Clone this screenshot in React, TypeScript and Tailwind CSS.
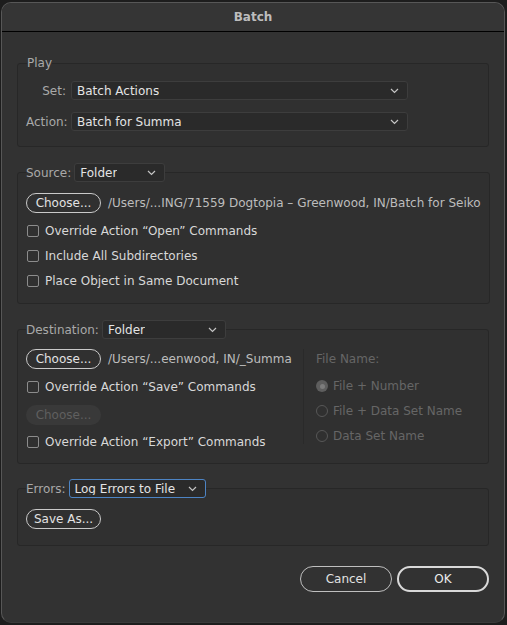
import React from "react";

const font = { fontFamily: '"DejaVu Sans", "Liberation Sans", sans-serif' };

function Chevron(): React.JSX.Element {
  return (
    <svg width="9" height="6" viewBox="0 0 9 6" fill="none" className="shrink-0">
      <path d="M1 1l3.5 3.5L8 1" stroke="#c4c4c4" strokeWidth="1.2" />
    </svg>
  );
}

function Dropdown({
  value,
  width,
  focused = false,
}: {
  value: string;
  width: string;
  focused?: boolean;
}): React.JSX.Element {
  return (
    <div
      className={`${width} h-[19px] flex items-center justify-between pl-[5px] pr-[8px] rounded-[3px] bg-[#2a2a2a] text-[#e4e4e4] ${
        focused ? "border border-[#4d84c4]" : "border border-[#3d3d3d]"
      }`}
    >
      <span className="truncate">{value}</span>
      <Chevron />
    </div>
  );
}

function Pill({ label, disabled = false }: { label: string; disabled?: boolean }): React.JSX.Element {
  return (
    <div
      className={`w-[75px] h-[20px] flex items-center justify-center rounded-full ${
        disabled ? "bg-[#393939] text-[#5f5f5f]" : "border border-[#c9c9c9] text-[#e2e2e2]"
      }`}
    >
      {label}
    </div>
  );
}

function Check({ label }: { label: string }): React.JSX.Element {
  return (
    <div className="h-[16px] flex items-center gap-[6px] pl-[1px]">
      <div className="w-[12px] h-[12px] rounded-[2px] border border-[#8c8c8c]" />
      <span className="text-[#d8d8d8]">{label}</span>
    </div>
  );
}

function Radio({ label, on = false }: { label: string; on?: boolean }): React.JSX.Element {
  return (
    <div className="h-[16px] flex items-center gap-[5px]">
      <div
        className={`w-[12px] h-[12px] rounded-full flex items-center justify-center ${
          on ? "bg-[#5e5e5e]" : "border border-[#575757]"
        }`}
      >
        {on && <div className="w-[5px] h-[5px] rounded-full bg-[#7c7c7c]" />}
      </div>
      <span className="text-[#666666]">{label}</span>
    </div>
  );
}

export default function App(): React.JSX.Element {
  return (
    <div className="w-[507px] h-[625px] bg-[#1d1d1d] pt-[2px] pl-[1px] text-[12px] leading-none" style={font}>
      <div className="w-[504px] h-[621px] rounded-[10px] border border-[#575757] border-b-[#3a3a3a] bg-[#323232] flex flex-col overflow-hidden">
        {/* Title */}
        <div className="h-[29px] shrink-0 flex items-center justify-center border-b border-black bg-[#353535]">
          <span className="font-bold text-[#bdbdbd]">Batch</span>
        </div>

        <div className="flex flex-col px-[15px] pt-[24px]">
          {/* Play */}
          <fieldset className="border border-[#272727] rounded-[3px] bg-[#303030] px-[9px] pb-[15px]">
            <legend className="text-[#a9a9a9] h-[14px] flex items-center">Play</legend>
            <div className="flex flex-col gap-[12px] mt-[11px] -ml-[1px]">
              <div className="flex items-center gap-[5px]">
                <span className="w-[40px] text-right text-[#a9a9a9]">Set:</span>
                <Dropdown value="Batch Actions" width="w-[337px]" />
              </div>
              <div className="flex items-center gap-[5px]">
                <span className="w-[40px] text-right text-[#a9a9a9]">Action:</span>
                <Dropdown value="Batch for Summa" width="w-[337px]" />
              </div>
            </div>
          </fieldset>

          {/* Source */}
          <fieldset className="mt-[16px] border border-[#272727] rounded-[3px] bg-[#303030] px-[8px] pb-[14px]">
            <legend className="flex items-center gap-[3px]">
              <span className="text-[#a9a9a9]">Source:</span>
              <Dropdown value="Folder" width="w-[91px]" />
            </legend>
            <div className="flex flex-col mt-[11px]">
              <div className="flex items-center gap-[7px]">
                <Pill label="Choose..." />
                <span className="text-[#bdbdbd] whitespace-nowrap">
                  /Users/...ING/71559 Dogtopia – Greenwood, IN/Batch for Seiko
                </span>
              </div>
              <div className="flex flex-col gap-[9px] mt-[10px]">
                <Check label="Override Action “Open” Commands" />
                <Check label="Include All Subdirectories" />
                <Check label="Place Object in Same Document" />
              </div>
            </div>
          </fieldset>

          {/* Destination */}
          <fieldset className="mt-[16px] border border-[#272727] rounded-[3px] bg-[#303030] px-[8px] pb-[13px]">
            <legend className="flex items-center gap-[3px]">
              <span className="text-[#a9a9a9]">Destination:</span>
              <Dropdown value="Folder" width="w-[124px]" />
            </legend>
            <div className="flex mt-[10px]">
              <div className="w-[277px] flex flex-col">
                <div className="flex items-center gap-[7px]">
                  <Pill label="Choose..." />
                  <span className="text-[#bdbdbd] whitespace-nowrap">/Users/...eenwood, IN/_Summa</span>
                </div>
                <div className="mt-[10px]">
                  <Check label="Override Action “Save” Commands" />
                </div>
                <div className="mt-[10px]">
                  <Pill label="Choose..." disabled />
                </div>
                <div className="mt-[9px]">
                  <Check label="Override Action “Export” Commands" />
                </div>
              </div>
              <div className="w-px bg-[#2a2a2a] mb-[6px]" />
              <div className="flex flex-col pl-[12px] pt-[2px]">
                <span className="h-[16px] flex items-center text-[#666666]">File Name:</span>
                <div className="flex flex-col gap-[9px] mt-[11px]">
                  <Radio label="File + Number" on />
                  <Radio label="File + Data Set Name" />
                  <Radio label="Data Set Name" />
                </div>
              </div>
            </div>
          </fieldset>

          {/* Errors */}
          <fieldset className="mt-[15px] border border-[#272727] rounded-[3px] bg-[#303030] px-[8px] pb-[16px]">
            <legend className="flex items-center gap-[3px]">
              <span className="text-[#a9a9a9]">Errors:</span>
              <Dropdown value="Log Errors to File" width="w-[137px]" focused />
            </legend>
            <div className="mt-[11px]">
              <Pill label="Save As..." />
            </div>
          </fieldset>

          {/* Buttons */}
          <div className="flex justify-end gap-[5px] mt-[20px]">
            <div className="w-[92px] h-[26px] rounded-full border border-[#bfbfbf] flex items-center justify-center text-[#e2e2e2]">
              Cancel
            </div>
            <div className="w-[92px] h-[26px] rounded-full border-2 border-[#d9d9d9] flex items-center justify-center text-[#ececec]">
              OK
            </div>
          </div>
        </div>
      </div>
    </div>
  );
}
